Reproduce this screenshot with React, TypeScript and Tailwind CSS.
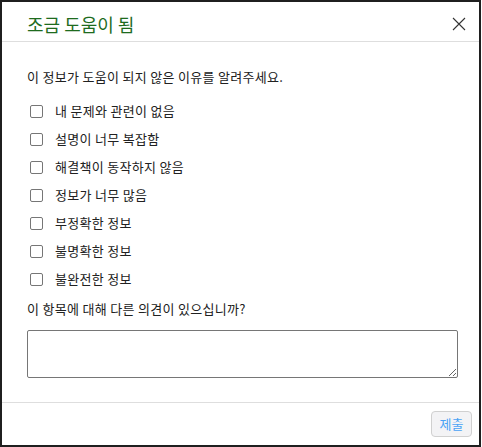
import * as React from 'react';

const reasons = [
  '내 문제와 관련이 없음',
  '설명이 너무 복잡함',
  '해결책이 동작하지 않음',
  '정보가 너무 많음',
  '부정확한 정보',
  '불명확한 정보',
  '불완전한 정보',
];

function CloseIcon() {
  return (
    <svg width="14" height="14" viewBox="0 0 14 14" fill="none">
      <path d="M1 1L13 13M13 1L1 13" stroke="#333" strokeWidth="1.1" />
    </svg>
  );
}

export default function App() {
  const [checked, setChecked] = React.useState<boolean[]>(reasons.map(() => false));

  return (
    <div
      className="w-[481px] h-[447px] bg-white border-2 border-[#1f1f1f] flex flex-col text-[#212121]"
      style={{ fontFamily: '"Noto Sans CJK KR", "Noto Sans", sans-serif' }}
    >
      <div className="h-[40px] flex items-center justify-between pl-[25px] pr-[13px] border-b border-[#dedede]">
        <h2 className="text-[18px] leading-[26px] pt-[4px] text-[#1e6b1e] font-normal">조금 도움이 됨</h2>
        <button className="w-[14px] h-[14px] flex items-center justify-center mt-[4px]">
          <CloseIcon />
        </button>
      </div>

      <div className="flex-1 flex flex-col px-[25px] pt-[25px]">
        <p className="text-[13px] leading-[20px] tracking-[0.3px]">이 정보가 도움이 되지 않은 이유를 알려주세요.</p>
        <div className="mt-[10px] flex flex-col">
          {reasons.map((r, i) => (
            <label key={r} className="h-[28px] flex items-center gap-[12px] pl-[3px] text-[13px] tracking-[0.3px] cursor-pointer">
              <input
                type="checkbox"
                checked={checked[i]}
                onChange={() => setChecked(checked.map((c, j) => (j === i ? !c : c)))}
                className="appearance-none w-[13px] h-[13px] border border-[#767676] rounded-[2px] bg-white"
              />
              <span>{r}</span>
            </label>
          ))}
        </div>
        <p className="mt-[6px] text-[13px] leading-[20px] tracking-[0.3px]">이 항목에 대해 다른 의견이 있으십니까?</p>
        <textarea className="mt-[11px] w-[431px] h-[48px] border border-[#767676] rounded-[2px] outline-none resize-y" />
      </div>

      <div className="h-[43px] border-t border-[#dedede] flex justify-end pt-[8px] pr-[7px]">
        <button className="w-[41px] h-[26px] rounded-[4px] border border-[#d0d0d0] bg-[#f3f3f5] text-[13px] text-[#4aa3f5]">
          제출
        </button>
      </div>
    </div>
  );
}
